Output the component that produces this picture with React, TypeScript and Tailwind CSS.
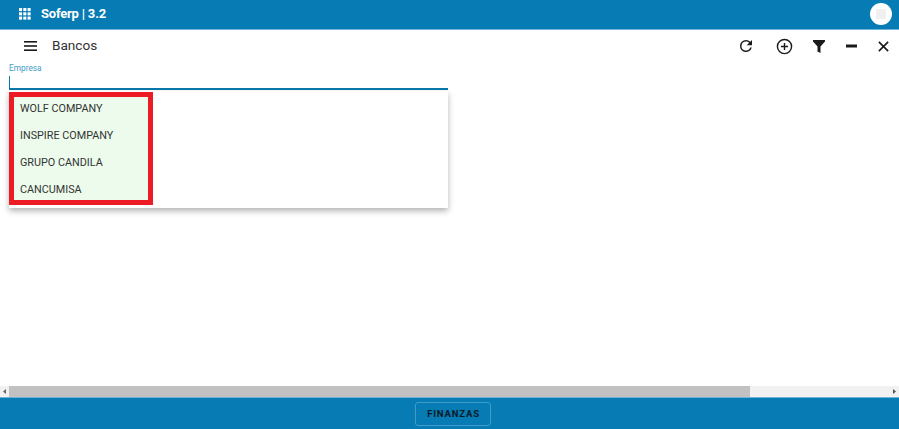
import React from "react";

const items = ["WOLF COMPANY", "INSPIRE COMPANY", "GRUPO CANDILA", "CANCUMISA"];
const slot = "w-[32px] flex items-center justify-center text-[#1a1a1a]";

function Grid() {
  return (
    <svg width="12" height="12" viewBox="0 0 14 14" fill="#fff">
      {[0, 5, 10].flatMap((y) =>
        [0, 5, 10].map((x) => <rect key={`${x}-${y}`} x={x} y={y} width="3.6" height="3.6" />)
      )}
    </svg>
  );
}

export default function App() {
  return (
    <div className="h-[429px] w-[899px] flex flex-col overflow-hidden bg-white font-['Roboto',sans-serif]">
      <header className="h-[30px] shrink-0 flex items-center justify-between bg-[#067bb4] border-b border-[#6fb4d6] pl-[19px] pr-[7px] pb-[2px]">
        <div className="flex items-center gap-[10px]">
          <Grid />
          <span className="text-[13px] font-bold tracking-[-0.2px] text-white leading-none">Soferp | 3.2</span>
        </div>
        <div className="w-[22px] h-[22px] rounded-full bg-white flex items-center justify-center">
          <svg width="10" height="10" viewBox="0 0 10 10" fill="#f0f0f0"><path d="M0 0h10v10H0z" /></svg>
        </div>
      </header>

      <div className="h-[32px] shrink-0 flex items-center justify-between pl-[24px]">
        <div className="flex items-center gap-[15px]">
          <svg width="13" height="10" viewBox="0 0 13 10" fill="#1a1a1a">
            <rect width="13" height="1.6" /><rect y="4.2" width="13" height="1.6" /><rect y="8.4" width="13" height="1.6" />
          </svg>
          <span className="text-[13.600px] text-[#333] leading-none">Bancos</span>
        </div>
        <div className="flex items-center">
          <div className={`${slot} mr-[6px]`}>
            <svg className="w-[18px] h-[18px]" viewBox="0 0 24 24" fill="currentColor"><path d="M17.65 6.35A7.96 7.96 0 0 0 12 4a8 8 0 1 0 7.73 10h-2.08A6 6 0 1 1 12 6c1.66 0 3.14.69 4.22 1.78L13 11h7V4l-2.35 2.35z" /></svg>
          </div>
          <div className={`${slot} mr-[3px]`}>
            <svg className="w-[17px] h-[17px]" viewBox="0 0 24 24" fill="none" stroke="currentColor" strokeWidth="2"><circle cx="12" cy="12" r="10" /><path d="M12 7v10M7 12h10" /></svg>
          </div>
          <div className={slot}>
            <svg className="w-[12px] h-[13px]" viewBox="0 0 12 13" fill="currentColor"><path d="M0 0h12v1.500L7.500 6.500V13l-3-1.500v-5L0 1.500z" /></svg>
          </div>
          <div className={slot}>
            <svg className="w-[11px] h-[4px]" viewBox="0 0 11 4" fill="currentColor"><rect y="0.500" width="11" height="3" /></svg>
          </div>
          <div className={slot}>
            <svg className="w-[13px] h-[13px]" viewBox="0 0 14 14" fill="none" stroke="currentColor" strokeWidth="1.700"><path d="M2 2l10 10M12 2L2 12" /></svg>
          </div>
        </div>
      </div>

      <main className="flex-1 min-h-0 pl-[9px]">
        <div className="w-[439px] relative">
          <label className="block text-[8.300px] leading-[10px] pt-[1px] h-[11px] text-[#3f9cc9]">Empresa</label>
          <div className="h-[17px] border-b-2 border-[#0b78ad] pt-[3px] pb-[2px]">
            <div className="w-px h-[12px] bg-[#0b78ad]" />
          </div>
          <div className="absolute top-[29px] left-0 w-full h-[117px] bg-white shadow-[0_3px_6px_rgba(0,0,0,0.3)] pt-px">
            <ul className="w-[144px] h-[113px] border-[5px] border-[#ed1c24] bg-[#ecfbec] flex flex-col justify-center">
              {items.map((t) => (
                <li key={t} className="h-[27px] shrink-0 flex items-center pl-[6px] pt-[2px] text-[10.800px] text-[#333] leading-none">{t}</li>
              ))}
            </ul>
          </div>
        </div>
      </main>

      <div className="h-[11px] shrink-0 flex items-center bg-[#f1f1f1]">
        <svg width="9" height="11" viewBox="0 0 9 11" fill="#666"><path d="M6 3v5L3 5.500z" /></svg>
        <div className="h-full w-[741px] bg-[#c1c1c1]" />
        <div className="flex-1" />
        <svg width="9" height="11" viewBox="0 0 9 11" fill="#555"><path d="M3 3v5l3-2.500z" /></svg>
      </div>

      <footer className="h-[32px] shrink-0 flex items-center justify-center bg-[#067bb4] border-t border-[#6fb4d6]">
        <button className="w-[76px] h-[24px] ml-[7px] pl-[1px] rounded-[3px] border border-[#3f9cc9] text-[9.500px] font-bold tracking-[0.850px] text-[#0a1a28] leading-none">FINANZAS</button>
      </footer>
    </div>
  );
}
